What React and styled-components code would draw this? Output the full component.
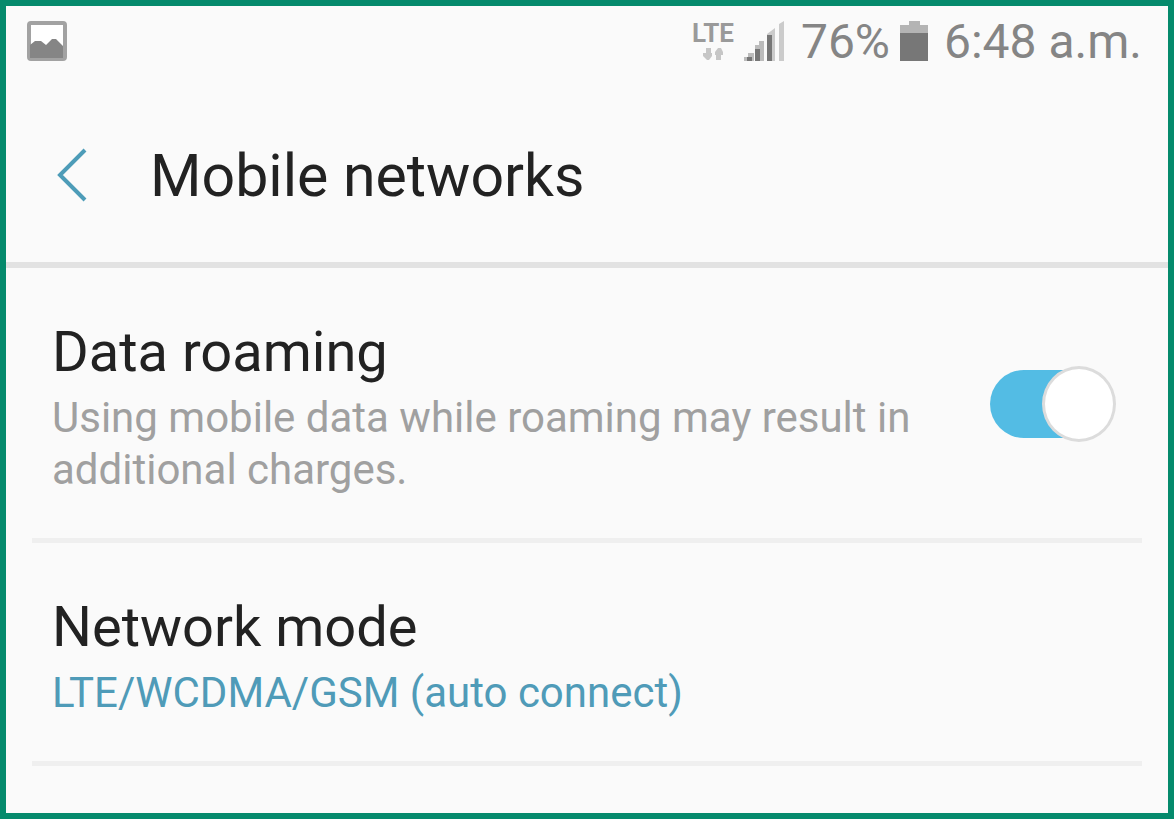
import { useState } from "react";
import styled, { createGlobalStyle } from "styled-components";

const GlobalStyle = createGlobalStyle`
  *,
  *::before,
  *::after {
    box-sizing: border-box;
  }

  body {
    margin: 0;
    background: #fafafa;
    font-family: Roboto, sans-serif;
  }
`;

const Screen = styled.div`
  min-height: 100vh;
  border: 6px solid #058a6c;
  background: #fafafa;
  color: #222;
`;

const StatusBar = styled.div`
  display: flex;
  align-items: center;
  justify-content: space-between;
  height: 70px;
  padding: 0 26px 0 20px;
  color: #858585;
`;

const StatusGroup = styled.div`
  display: flex;
  align-items: center;
  gap: ${({ $gap }) => $gap}px;
`;

const StatusText = styled.span`
  padding-top: 2px;
  font-size: 48px;
  line-height: 56px;
  white-space: nowrap;
`;

const NetworkType = styled.div`
  display: flex;
  flex-direction: column;
  align-items: center;
  gap: 4px;
  font-size: 26px;
  font-weight: 700;
  line-height: 22px;
  color: #9a9a9a;
`;

const TitleBar = styled.header`
  display: flex;
  align-items: center;
  gap: 56px;
  height: 192px;
  padding: 14px 44px 0;
  border-bottom: 6px solid #e2e2e2;
`;

const BackButton = styled.button`
  display: flex;
  padding: 0;
  border: 0;
  background: none;
  color: #4d9cb8;
  cursor: pointer;
`;

const Title = styled.h1`
  margin: 0;
  font-size: 59px;
  font-weight: 400;
  line-height: 72px;
`;

const Settings = styled.main`
  padding: 0 26px;
`;

const Row = styled.div`
  display: flex;
  align-items: center;
  justify-content: space-between;
  gap: 24px;
  padding: 52px 26px 42px 20px;
  border-bottom: 5px solid #efefef;
`;

const RowText = styled.div`
  display: flex;
  flex-direction: column;
  gap: 8px;
  max-width: 900px;
`;

const RowTitle = styled.label`
  font-size: 56px;
  line-height: 64px;
`;

const RowButton = styled.button`
  padding: 0;
  border: 0;
  background: none;
  color: inherit;
  font-family: inherit;
  font-size: 56px;
  line-height: 64px;
  text-align: left;
  cursor: pointer;
`;

const Summary = styled.p`
  margin: 0;
  font-size: 42px;
  line-height: 52px;
  color: ${({ $active }) => ($active ? "#4f9bb8" : "#a0a0a0")};
`;

const Switch = styled.input`
  appearance: none;
  display: grid;
  flex: none;
  align-items: center;
  width: 126px;
  height: 76px;
  margin: 0 0 8px;
  cursor: pointer;

  &::before,
  &::after {
    content: "";
    grid-area: 1 / 1;
  }

  &::before {
    width: 116px;
    height: 68px;
    border-radius: 34px;
    background: #c4c4c4;
  }

  &::after {
    width: 74px;
    height: 76px;
    border: 3px solid #dcdcdc;
    border-radius: 50%;
    background: #fff;
  }

  &:checked::before {
    background: #53bce4;
  }

  &:checked::after {
    justify-self: end;
  }
`;

const PictureIcon = () => (
  <svg width="42" height="42" viewBox="0 0 42 42" aria-hidden="true">
    <rect x="3" y="3" width="36" height="36" rx="2" fill="#fff" stroke="#a2a2a2" strokeWidth="4" />
    <path d="M4 25l5-4h6l5 4 6-6h4l7 7v12H4z" fill="#858585" />
  </svg>
);

const DataArrows = () => (
  <svg width="24" height="12" viewBox="0 0 24 12" fill="#c6c6c6" aria-hidden="true">
    <path d="M5 0h5v5h1v3l-3 4h-2L2 8V5h3zM15 12V7h-1V4l3-4h3l2 4v3h-2v5z" />
  </svg>
);

const SignalIcon = () => (
  <svg width="41" height="40" viewBox="0 0 41 40" aria-hidden="true">
    <path d="M0 40v-4h4v-4h6v8zM11 40V24h4v-4h5v20z" fill="#bcbcbc" />
    <path d="M23 40V13l8-6v33zM35 40V3l5-3v40z" fill="#cbcbcb" />
    <path d="M3 36h5v4H3zM11 28h5v12h-5zM23 14h5v26h-5z" fill="#777" />
  </svg>
);

const BatteryIcon = () => (
  <svg width="28" height="40" viewBox="0 0 28 40" aria-hidden="true">
    <path d="M9 0h11v4h8v10H0V4h9z" fill="#b4b4b4" />
    <path d="M0 12h28v28H0z" fill="#777" />
  </svg>
);

const BackIcon = () => (
  <svg width="44" height="60" viewBox="0 0 44 60" fill="none" aria-hidden="true">
    <path d="M35 4L10 29l25 25" stroke="currentColor" strokeWidth="4" />
  </svg>
);

export default function App() {
  const [roaming, setRoaming] = useState(true);

  return (
    <Screen>
      <GlobalStyle />
      <StatusBar>
        <PictureIcon />
        <StatusGroup $gap={16}>
          <StatusGroup $gap={10}>
            <NetworkType>
              LTE
              <DataArrows />
            </NetworkType>
            <SignalIcon />
          </StatusGroup>
          <StatusGroup $gap={10}>
            <StatusText>76%</StatusText>
            <BatteryIcon />
          </StatusGroup>
          <StatusText>6:48 a.m.</StatusText>
        </StatusGroup>
      </StatusBar>
      <TitleBar>
        <BackButton aria-label="Back">
          <BackIcon />
        </BackButton>
        <Title>Mobile networks</Title>
      </TitleBar>
      <Settings>
        <Row>
          <RowText>
            <RowTitle htmlFor="roaming">Data roaming</RowTitle>
            <Summary id="roaming-summary">
              Using mobile data while roaming may result in additional charges.
            </Summary>
          </RowText>
          <Switch
            id="roaming"
            type="checkbox"
            role="switch"
            aria-describedby="roaming-summary"
            checked={roaming}
            onChange={(e) => setRoaming(e.target.checked)}
          />
        </Row>
        <Row>
          <RowText>
            <RowButton>Network mode</RowButton>
            <Summary $active>LTE/WCDMA/GSM (auto connect)</Summary>
          </RowText>
        </Row>
      </Settings>
    </Screen>
  );
}
